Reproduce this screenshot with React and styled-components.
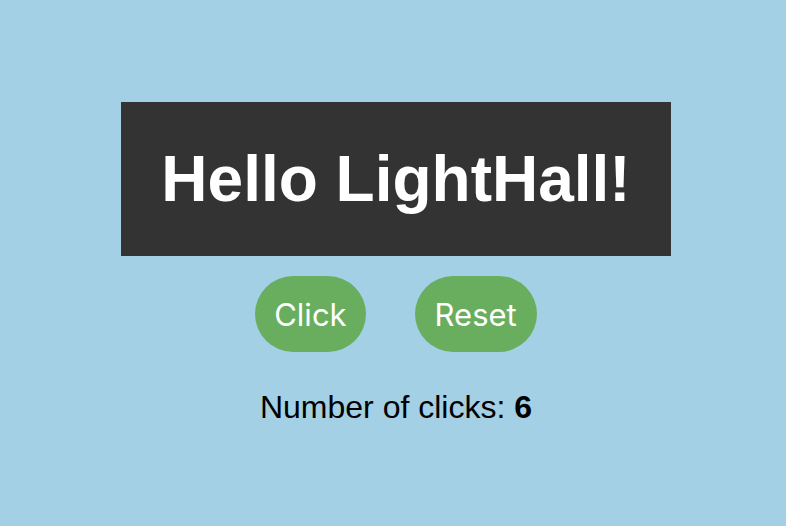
import React, { useState } from 'react';
import styled, { createGlobalStyle } from 'styled-components';

const GlobalStyle = createGlobalStyle`
  html, body {
    margin: 0;
    padding: 0;
    background: #a3d0e4;
  }
`;

const Page = styled.main`
  display: flex;
  flex-direction: column;
  align-items: center;
  min-height: 526px;
  padding: 102px 0 0 6px;
  box-sizing: border-box;
  font-family: 'Liberation Sans', Arial, sans-serif;
`;

const Banner = styled.h1`
  margin: 0;
  width: 550px;
  height: 154px;
  display: flex;
  align-items: center;
  justify-content: center;
  background: #333333;
  color: #ffffff;
  font-size: 64px;
  font-weight: 700;
`;

const Controls = styled.div`
  display: flex;
  gap: 49px;
  margin-top: 20px;
`;

const Button = styled.button`
  height: 76px;
  padding: 0 ${({ $pad }) => $pad}px;
  border: none;
  border-radius: 38px;
  background: #68ae5e;
  color: #ffffff;
  font-family: Inter, 'Noto Sans', sans-serif;
  font-size: 31px;
  cursor: pointer;
`;

const Count = styled.p`
  margin: 37px 0 0;
  font-size: 32px;
  color: #000;

  b {
    font-weight: 700;
  }
`;

export default function App() {
  const [clicks, setClicks] = useState(6);

  return (
    <>
      <GlobalStyle />
      <Page>
        <Banner>Hello LightHall!</Banner>
        <Controls>
          <Button $pad={19} onClick={() => setClicks(clicks + 1)}>Click</Button>
          <Button $pad={20} onClick={() => setClicks(0)}>Reset</Button>
        </Controls>
        <Count>
          Number of clicks: <b>{clicks}</b>
        </Count>
      </Page>
    </>
  );
}
